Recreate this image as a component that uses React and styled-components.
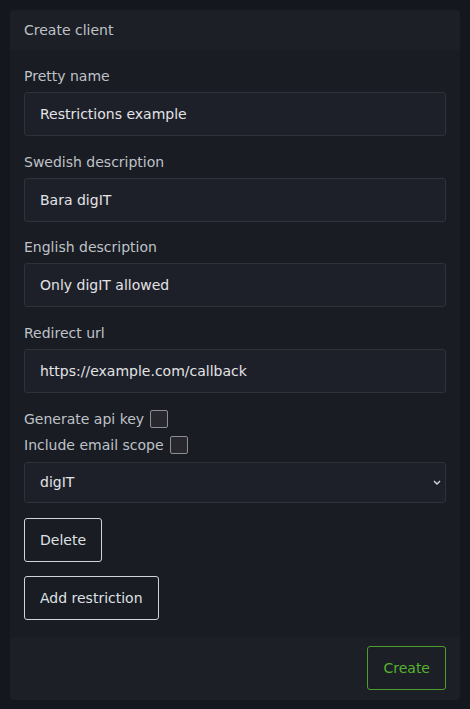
import React from 'react';
import styled, { createGlobalStyle } from 'styled-components';

const GlobalStyle = createGlobalStyle`
    html, body {
        margin: 0;
        padding: 0;
        background: #14171d;
    }

    body {
        font-family: 'DejaVu Sans', 'Liberation Sans', sans-serif;
        font-size: 14px;
    }

    * {
        box-sizing: border-box;
    }
`;

const fields = [
    { label: 'Pretty name', value: 'Restrictions example' },
    { label: 'Swedish description', value: 'Bara digIT' },
    { label: 'English description', value: 'Only digIT allowed' },
    { label: 'Redirect url', value: 'https://example.com/callback' },
];

const App = () => {
    return (
        <>
            <GlobalStyle />
            <Page>
                <Card>
                    <CardHeader>Create client</CardHeader>
                    <CardBody>
                        {fields.map((f) => (
                            <Field key={f.label}>
                                <Label>{f.label}</Label>
                                <TextInput defaultValue={f.value} />
                            </Field>
                        ))}
                        <CheckRow>
                            Generate api key
                            <Checkbox type='checkbox' />
                        </CheckRow>
                        <CheckRow>
                            Include email scope
                            <Checkbox type='checkbox' />
                        </CheckRow>
                        <SelectWrap>
                            <Select defaultValue='digIT'>
                                <option value='digIT'>digIT</option>
                            </Select>
                            <Chevron viewBox='0 0 8 5'>
                                <path
                                    d='M1 1l3 3 3-3'
                                    fill='none'
                                    stroke='#d8dae0'
                                    strokeWidth='1.4'
                                />
                            </Chevron>
                        </SelectWrap>
                        <Button>Delete</Button>
                        <Button>Add restriction</Button>
                    </CardBody>
                    <CardFooter>
                        <Button variant='success'>Create</Button>
                    </CardFooter>
                </Card>
            </Page>
        </>
    );
};

export default App;

const Page = styled.div`
    padding: 10px;
    min-height: 100vh;
    background: #14171d;
`;

const Card = styled.div`
    background: #191c23;
    border-radius: 4px;
    overflow: hidden;
`;

const CardHeader = styled.div`
    height: 40px;
    line-height: 40px;
    padding: 0 14px;
    background: #1c1f26;
    color: #bfc2c8;
`;

const CardBody = styled.div`
    display: flex;
    flex-direction: column;
    align-items: flex-start;
    padding: 16px 14px 17px;
`;

const Field = styled.div`
    display: flex;
    flex-direction: column;
    width: 100%;
    margin-bottom: 15.67px;
`;

const Label = styled.label`
    line-height: 20px;
    margin-bottom: 6px;
    color: #bfc2c8;
`;

const TextInput = styled.input`
    width: 100%;
    height: 44px;
    padding: 0 15px;
    background: #1e2029;
    border: 1px solid #2f323b;
    border-radius: 3px;
    color: #e2e3e6;
    font: inherit;
    outline: none;
`;

const CheckRow = styled.label`
    display: flex;
    align-items: center;
    gap: 6px;
    height: 20px;
    margin-bottom: 6.5px;
    color: #bfc2c8;
    line-height: 20px;
`;

const Checkbox = styled.input`
    appearance: none;
    width: 18px;
    height: 18px;
    margin: 0;
    background: #29272e;
    border: 1px solid #8d8e94;
    border-radius: 2px;
`;

const SelectWrap = styled.div`
    position: relative;
    width: 100%;
    margin-bottom: 15px;
`;

const Select = styled.select`
    appearance: none;
    width: 100%;
    height: 41px;
    padding: 0 15px;
    background: #1e2029;
    border: 1px solid #2f323b;
    border-radius: 3px;
    color: #e2e3e6;
    font: inherit;
    outline: none;
`;

const Chevron = styled.svg`
    position: absolute;
    right: 5px;
    top: 18px;
    width: 8px;
    height: 5px;
    pointer-events: none;
`;

const Button = styled.button`
    height: 44px;
    padding: 0 15px;
    margin-bottom: 14.33px;
    background: transparent;
    border: 1px solid
        ${(p) => (p.variant === 'success' ? '#4e9f2a' : '#d3d4d8')};
    border-radius: 3px;
    color: ${(p) => (p.variant === 'success' ? '#55b22d' : '#dfe0e3')};
    font: inherit;
    cursor: pointer;

    &:last-child {
        margin-bottom: 0;
    }
`;

const CardFooter = styled.div`
    display: flex;
    justify-content: flex-end;
    padding: 9px 14px 10px;
    background: #1c1f26;
`;
